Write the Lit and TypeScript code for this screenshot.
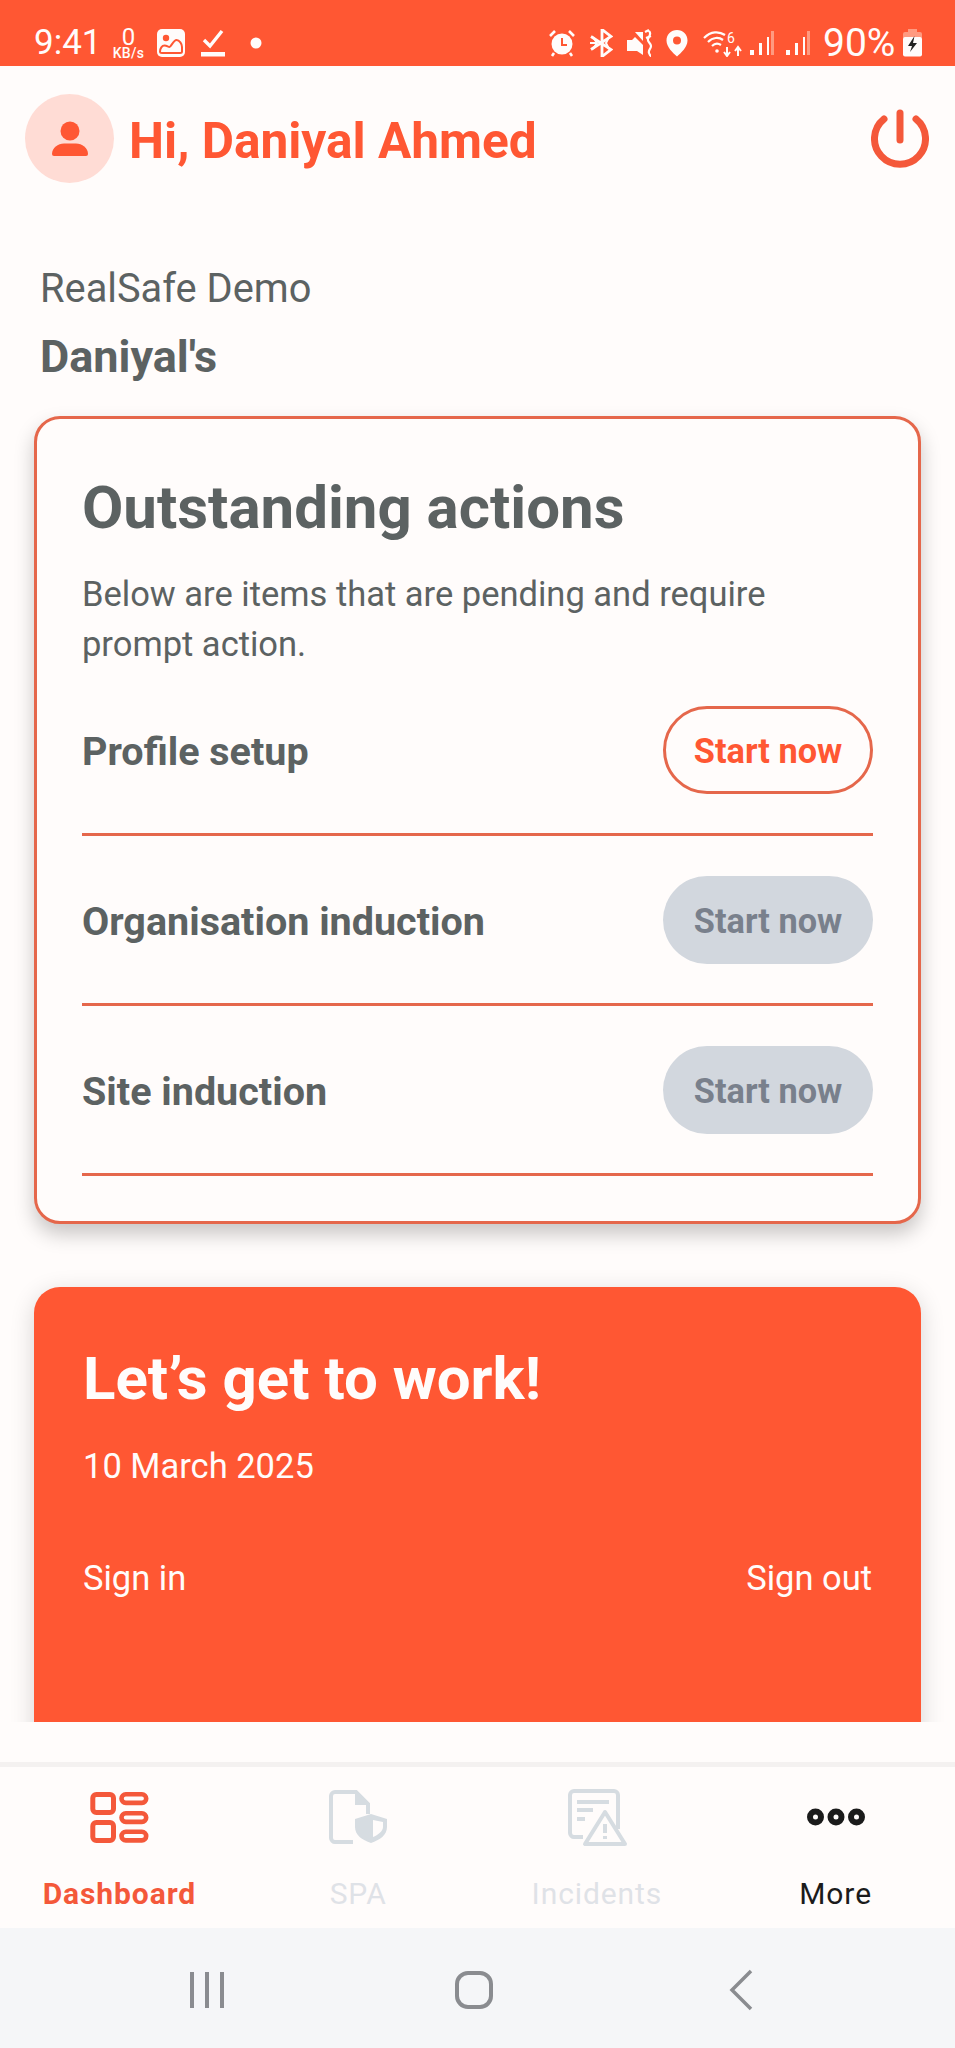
import { LitElement, html, css, svg } from "lit";
import { customElement } from "lit/decorators.js";

const statusLeft = html`
  <svg class="ic" style="width:28px;height:28px" viewBox="0 0 28 28"><rect width="28" height="28" rx="5" fill="#FFFCFB"/><circle cx="9" cy="9" r="3.2" fill="#FF5733"/><path d="M3 22.500c0-3 2-6 4.500-6 2.500 0 3.500 1.500 5 1.500s4-7 7-7 5.500 4 5.500 7v4.500c0 1-1 1.500-2 1.500H5c-1 0-2-.500-2-1.500z" fill="none" stroke="#FF5733" stroke-width="2"/></svg>
  <svg class="ic" style="width:24px;height:28px;margin-left:16px" viewBox="0 0 24 28"><path d="M3 11l6 6L21 2" fill="none" stroke="#FFFCFB" stroke-width="3.400"/><rect y="23" width="24" height="4.500" fill="#FFFCFB"/></svg>
  <svg class="ic" style="width:12px;height:12px;margin-left:25px" viewBox="0 0 12 12"><circle cx="6" cy="6" r="5.500" fill="#FFFCFB"/></svg>`;

const bars = svg`<rect x="0" y="21" width="4" height="5" fill="#FFFCFB"/><rect x="9" y="14" width="3" height="12" fill="#FFFCFB"/><rect x="17" y="8" width="2" height="18" fill="#FFFCFB"/><rect x="21" y="2" width="3" height="24" fill="#FF9A80"/>`;

const statusRight = html`
  <svg class="ic" style="width:26px;height:28px" viewBox="0 0 26 28"><circle cx="13" cy="15" r="10.500" fill="#FFFCFB"/><path d="M13 9v7h5" fill="none" stroke="#FF5733" stroke-width="2"/><path d="M1 7l5-5M25 7l-5-5M5 24l-2 3M21 24l2 3" stroke="#FFFCFB" stroke-width="2.600" fill="none"/></svg>
  <svg class="ic" style="width:24px;height:28px;margin-left:14px" viewBox="0 0 24 28"><path d="M2 7.500l20 13-9 7V.500l9 7-20 13" fill="none" stroke="#FFFCFB" stroke-width="2.800"/><path d="M1 14h7M4 8l4 6-4 6M20 8l-3 6 3 6" fill="none" stroke="#FFFCFB" stroke-width="2"/></svg>
  <svg class="ic" style="width:27px;height:28px;margin-left:13px" viewBox="0 0 27 28"><path d="M1 11h5l3-3 8 8v10l-6-4H1z" fill="#FFFCFB"/><path d="M9 3l8 9V3z" fill="#FFFCFB"/><path d="M19 3l4-2M20 9l5-2M23 2c3 3 0 5-1 8s3 4 3 7-3 4-2 7 2 3 2 3" fill="none" stroke="#FFFCFB" stroke-width="2.200"/></svg>
  <svg class="ic" style="width:22px;height:28px;margin-left:13px" viewBox="0 0 22 28"><path fill-rule="evenodd" d="M11 1C5 1 .500 5.500.500 11.500 .500 18 7 24 11 27.500 15 24 21.500 18 21.500 11.500 21.500 5.500 17 1 11 1zm0 6.500a4 4 0 110 8 4 4 0 010-8z" fill="#FFFCFB"/></svg>
  <svg class="ic" style="width:39px;height:28px;margin-left:15px" viewBox="0 0 39 28"><path d="M1 9c7-7 15-7 21-3M5 13c5-5 11-5 15-2M9 17c3-3 6-3 9-1" fill="none" stroke="#FFFCFB" stroke-width="2.200"/><circle cx="14" cy="22" r="1.800" fill="#FFFCFB"/><text x="24" y="14" font-family="Roboto" font-size="14" fill="#FFFCFB">6</text><path d="M24 18v9M21 23l3 4 3-4M35 27v-9M32 22l3-4 3 4" fill="none" stroke="#FFFCFB" stroke-width="2"/></svg>
  <svg class="ic" style="width:24px;height:28px;margin-left:8px" viewBox="0 0 24 28">${bars}</svg>
  <svg class="ic" style="width:24px;height:28px;margin-left:12px" viewBox="0 0 24 28">${bars}</svg>
  <span class="pct">90%</span>
  <svg class="ic" style="width:19px;height:28px;margin-left:6px" viewBox="0 0 19 28"><rect x="5" y="0" width="9" height="4" fill="#FF9A80"/><rect x="0" y="3" width="19" height="7" rx="2" fill="#FF9A80"/><rect x="0" y="8" width="19" height="19.500" rx="2" fill="#FFFCFB"/><path d="M11.500 7L5 17h4l-2 6 7-9h-4z" fill="#222"/></svg>`;

type Tab = { label: string; cls: string; icon: unknown };
const tabs: Tab[] = [
  {
    label: "Dashboard",
    cls: "active",
    icon: html`<svg class="tabicon" viewBox="0 0 60 58"><g fill="none" stroke="#F4583A" stroke-width="5"><rect x="3.800" y="6.500" width="20.700" height="18" rx="3.500"/><rect x="3.800" y="34.500" width="20.700" height="18" rx="3.500"/></g><g fill="none" stroke="#F4583A" stroke-width="4.600"><rect x="32.500" y="6.300" width="24.700" height="8.600" rx="4.300"/><rect x="32.500" y="25.300" width="24.700" height="8.600" rx="4.300"/><rect x="32.500" y="43.800" width="24.700" height="8.600" rx="4.300"/></g></svg>`,
  },
  {
    label: "SPA",
    cls: "off",
    icon: html`<svg class="tabicon" viewBox="0 0 60 58"><path d="M25 54H7c-2 0-4-2-4-4V8c0-2 2-4 4-4h21l12 12v10" fill="none" stroke="#D6DCE1" stroke-width="4"/><path d="M27 4v13h13z" fill="#D6DCE1"/><path fill-rule="evenodd" d="M43 26l16 5v8c0 8-7 13-16 16-9-3-16-8-16-16v-8zm2 6v17c5-2 10-6 10-10v-5z" fill="#D6DCE1"/></svg>`,
  },
  {
    label: "Incidents",
    cls: "off",
    icon: html`<svg class="tabicon" viewBox="0 0 60 58"><path d="M16 49H7c-2 0-4-2-4-4V7c0-2 2-4 4-4h40c2 0 4 2 4 4v34" fill="none" stroke="#D6DCE1" stroke-width="4"/><path d="M10 14h32M10 22h16M10 31h8" stroke="#D6DCE1" stroke-width="4" fill="none"/><path d="M38 24L18 56h40z" fill="#FFFCFB" stroke="#D6DCE1" stroke-width="4" stroke-linejoin="round"/><path d="M38 36v9M38 48v3" stroke="#D6DCE1" stroke-width="4" fill="none"/></svg>`,
  },
  {
    label: "More",
    cls: "more",
    icon: html`<svg class="tabicon" viewBox="0 0 60 58"><g fill="none" stroke="#1B1B1B" stroke-width="6"><circle cx="9.500" cy="29" r="5.500"/><circle cx="30" cy="29" r="5.500"/><circle cx="50.500" cy="29" r="5.500"/></g></svg>`,
  },
];

const rows = [
  { label: "Profile setup", enabled: true },
  { label: "Organisation induction", enabled: false },
  { label: "Site induction", enabled: false },
];

@customElement("app-root")
export class AppRoot extends LitElement {
  static styles = css`
    :host {
      display: flex;
      flex-direction: column;
      width: 955px;
      height: 2048px;
      overflow: hidden;
      background: #fffcfb;
      font-family: Roboto, "Noto Sans", sans-serif;
      color: #5c6262;
    }
    .ic { display: block; flex: none; }
    .status {
      flex: none;
      height: 66px;
      background: #ff5733;
      display: flex;
      align-items: flex-start;
      justify-content: space-between;
      padding: 0 33px 0 34px;
      color: #fffcfb;
      box-sizing: border-box;
    }
    .sleft, .sright { display: flex; align-items: center; height: 28px; margin-top: 29px; }
    .time { font-size: 35px; font-weight: 400; white-space: nowrap; line-height: 28px; }
    .kb { width: 36px; margin: 0 10px 0 9px; display: flex; flex-direction: column; align-items: center; font-weight: 500; line-height: 1; }
    .kb b { font-size: 24px; font-weight: 400; line-height: 20px; }
    .kb i { font-style: normal; font-size: 14px; line-height: 12px; white-space: nowrap; letter-spacing: 0.3px; }
    .pct { font-size: 39px; font-weight: 400; margin-left: 13px; width: 74px; line-height: 28px; white-space: nowrap; }
    .main { flex: none; height: 1656px; overflow: hidden; display: flex; flex-direction: column; }
    .head {
      flex: none;
      display: flex;
      align-items: center;
      padding: 28px 26px 0 25px;
    }
    .avatar {
      width: 89px; height: 89px; border-radius: 50%;
      background: #ffdcd5;
      display: flex; align-items: center; justify-content: center;
      flex: none;
    }
    .hello { font-size: 49.600px; font-weight: 700; color: #ff5733; margin-left: 15px; padding-top: 6px; flex: 1; line-height: 83px; }
    .org { padding: 0 40px; }
    .org .a { font-size: 39.800px; font-weight: 400; line-height: 48px; margin-top: 82px; }
    .org .b { font-size: 45px; font-weight: 700; line-height: 48px; margin-top: 20px; }
    .card {
      margin: 35px 34px 0;
      flex: none;
      height: 808px;
      box-sizing: border-box;
      border: 3px solid #e5674b;
      border-radius: 26px;
      padding: 56px 45px 0;
      background: #fffcfb;
      box-shadow: 0 10px 20px rgba(0, 0, 0, 0.22);
    }
    .card h2 { margin: 0; font-size: 60px; font-weight: 700; line-height: 66px; }
    .card p { margin: 28px 0 0; font-size: 34.500px; font-weight: 400; line-height: 50px; }
    .rows { margin-top: -3px; }
    .row {
      height: 170px;
      box-sizing: border-box;
      border-bottom: 3px solid #e5674b;
      display: flex;
      align-items: center;
      justify-content: space-between;
    }
    .row span { font-size: 39.500px; font-weight: 700; padding-top: 3px; }
    .btn {
      width: 210px; height: 88px; box-sizing: border-box;
      border-radius: 44px;
      display: flex; align-items: center; justify-content: center;
      font-size: 34.300px; font-weight: 700;
      font-family: inherit;
      padding: 2px 0 0;
      white-space: nowrap;
    }
    .btn.on { border: 3px solid #e5674b; color: #ff5733; background: transparent; }
    .btn.dis { border: none; background: #d2d7de; color: #79808c; }
    .work {
      margin: 63px 34px 0;
      flex: none;
      height: 500px;
      box-sizing: border-box;
      background: #ff5733;
      border-radius: 26px;
      padding: 58px 49px 0;
      color: #fffcfb;
      box-shadow: 0 6px 24px rgba(0, 0, 0, 0.16);
    }
    .work h2 { margin: 0; font-size: 60px; font-weight: 700; line-height: 68px; }
    .work .date { font-size: 34.500px; line-height: 44px; margin-top: 31px; }
    .work .sign { display: flex; justify-content: space-between; font-size: 34.500px; line-height: 44px; margin-top: 68px; }
    .gap { flex: none; height: 40px; }
    .tabs {
      flex: none;
      height: 166px;
      box-sizing: border-box;
      border-top: 5px solid #f4f1f0;
      display: grid;
      grid-template-columns: repeat(4, 1fr);
    }
    .tab { display: flex; flex-direction: column; align-items: center; }
    .tabicon { width: 60px; height: 58px; margin-top: 21px; display: block; }
    .tab span { font-size: 30px; line-height: 34px; margin-top: 31px; letter-spacing: 0.9px; }
    .tab.active span { color: #f4583a; font-weight: 700; }
    .tab.off span { color: #dfe2e7; }
    .tab.more span { color: #1b1b1b; }
    .nav {
      flex: 1;
      background: #f5f6f8;
      display: grid;
      grid-template-columns: repeat(3, 267px);
      justify-content: center;
      align-items: center;
      justify-items: center;
      padding: 4px 7px 0 0;
    }
    .nav svg { display: block; }
  `;

  render() {
    return html`
      <div class="status">
        <div class="sleft">
          <span class="time">9:41</span>
          <div class="kb"><b>0</b><i>KB/s</i></div>
          ${statusLeft}
        </div>
        <div class="sright">${statusRight}</div>
      </div>
      <div class="main">
        <div class="head">
          <div class="avatar">
            <svg width="36" height="36" viewBox="0 0 36 36"><circle cx="18" cy="10" r="9.500" fill="#FF5733"/><path d="M0 33c0-6 6-10.500 12-10.500h12c6 0 12 4.500 12 10.500q0 2-2 2H2q-2 0-2-2z" fill="#FF5733"/></svg>
          </div>
          <div class="hello">Hi, Daniyal Ahmed</div>
          <svg width="58" height="60" viewBox="0 0 58 60"><path d="M13 10a25.500 25.500 0 1 0 32 0" fill="none" stroke="#F4583A" stroke-width="7" stroke-linecap="round"/><path d="M29 4v27" fill="none" stroke="#F4583A" stroke-width="7" stroke-linecap="round"/></svg>
        </div>
        <div class="org">
          <div class="a">RealSafe Demo</div>
          <div class="b">Daniyal's</div>
        </div>
        <div class="card">
          <h2>Outstanding actions</h2>
          <p>Below are items that are pending and require<br />prompt action.</p>
          <div class="rows">
            ${rows.map(
              (r) => html`<div class="row"><span>${r.label}</span><button class="btn ${r.enabled ? "on" : "dis"}">Start now</button></div>`
            )}
          </div>
        </div>
        <div class="work">
          <h2>Let’s get to work!</h2>
          <div class="date">10 March 2025</div>
          <div class="sign"><span>Sign in</span><span>Sign out</span></div>
        </div>
      </div>
      <div class="gap"></div>
      <div class="tabs">
        ${tabs.map((t) => html`<div class="tab ${t.cls}">${t.icon}<span>${t.label}</span></div>`)}
      </div>
      <div class="nav">
        <svg width="36" height="38" viewBox="0 0 36 38"><path d="M3 1v36M18 1v36M33 1v36" stroke="#8A8C90" stroke-width="4" fill="none"/></svg>
        <svg width="38" height="38" viewBox="0 0 38 38"><rect x="2" y="2" width="34" height="34" rx="11" fill="none" stroke="#8A8C90" stroke-width="4"/></svg>
        <svg width="24" height="42" viewBox="0 0 24 42"><path d="M22 2L3 21l19 19" fill="none" stroke="#8A8C90" stroke-width="3.500"/></svg>
      </div>
    `;
  }
}
